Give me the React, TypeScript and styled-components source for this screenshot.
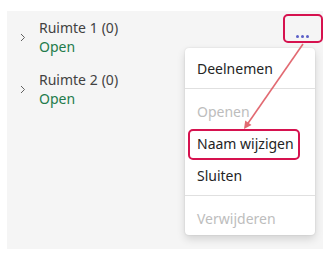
import React from "react";
import styled, { createGlobalStyle } from "styled-components";

const Global = createGlobalStyle`
  html, body { margin: 0; padding: 0; background: #ffffff; }
  body { font-family: "Segoe UI", "Noto Sans", "Open Sans", sans-serif; }
  * { box-sizing: border-box; }
`;

const Page = styled.div`
  position: relative;
  width: 330px;
  height: 253px;
  padding: 11px 0 0 7px;
`;

const Panel = styled.div`
  position: relative;
  width: 316px;
  height: 238px;
  background: #f5f5f5;
  padding-top: 7px;
  display: flex;
  flex-direction: column;
  gap: 14px;
`;

const Row = styled.div`
  display: flex;
  align-items: center;
  padding-left: 13px;
  padding-right: 12px;
`;

const Chevron = styled.span`
  width: 19px;
  display: flex;
  align-items: center;
  color: #616161;
`;

const Info = styled.div`
  display: flex;
  flex-direction: column;
  flex: 1;
`;

const Name = styled.div`
  font-size: 14px;
  line-height: 19px;
  color: #424242;
  white-space: nowrap;
`;

const Count = styled.span`
  margin-left: 4px;
`;

const Status = styled.div`
  font-size: 14px;
  line-height: 19px;
  color: #237b4b;
`;

const MoreButton = styled.div`
  display: flex;
  gap: 2px;
  align-self: flex-start;
  margin-top: 17px;
  margin-right: 2px;
`;

const Dot = styled.span`
  width: 3px;
  height: 3px;
  border-radius: 50%;
  background: #5b5fc7;
`;

const Menu = styled.div`
  position: absolute;
  left: 178px;
  top: 37px;
  width: 130px;
  background: #ffffff;
  border-radius: 4px;
  box-shadow: 0 0 2px rgba(0, 0, 0, 0.12), 0 4px 8px rgba(0, 0, 0, 0.14);
  padding: 4px 0 1px;
  display: flex;
  flex-direction: column;
`;

const Item = styled.div<{ $disabled?: boolean }>`
  height: 32px;
  display: flex;
  align-items: center;
  padding-left: 12px;
  font-size: 14px;
  line-height: 19px;
  color: ${(p) => (p.$disabled ? "#bdbdbd" : "#242424")};
`;

const Divider = styled.div`
  height: 1px;
  background: #e0e0e0;
  margin: 4px 0 6px;
`;

const Highlight = styled.div<{ $x: number; $y: number; $w: number; $h: number }>`
  position: absolute;
  left: ${(p) => p.$x}px;
  top: ${(p) => p.$y}px;
  width: ${(p) => p.$w}px;
  height: ${(p) => p.$h}px;
  border: 2px solid #d6124f;
  border-radius: 5px;
  pointer-events: none;
`;

const ArrowLayer = styled.svg`
  position: absolute;
  left: 0;
  top: 0;
  width: 330px;
  height: 253px;
  pointer-events: none;
`;

const ChevronIcon = () => (
  <svg width="6" height="9" viewBox="0 0 6 9">
    <path d="M1 1 L4.5 4.5 L1 8" fill="none" stroke="#616161" strokeWidth="1" />
  </svg>
);

const rooms = [
  { name: "Ruimte 1", count: "(0)", status: "Open", more: true },
  { name: "Ruimte 2", count: "(0)", status: "Open", more: false },
];

export default function App() {
  return (
    <>
      <Global />
      <Page>
        <Panel>
          {rooms.map((r) => (
            <Row key={r.name}>
              <Chevron>
                <ChevronIcon />
              </Chevron>
              <Info>
                <Name>
                  {r.name}
                  <Count>{r.count}</Count>
                </Name>
                <Status>{r.status}</Status>
              </Info>
              {r.more && (
                <MoreButton>
                  <Dot />
                  <Dot />
                  <Dot />
                </MoreButton>
              )}
            </Row>
          ))}
          <Menu>
            <Item>Deelnemen</Item>
            <Divider />
            <Item $disabled>Openen</Item>
            <Item>Naam wijzigen</Item>
            <Item>Sluiten</Item>
            <Divider />
            <Item $disabled>Verwijderen</Item>
          </Menu>
        </Panel>
        <Highlight $x={283} $y={14} $w={40} $h={29} />
        <Highlight $x={188} $y={129} $w={112} $h={31} />
        <ArrowLayer viewBox="0 0 330 253">
          <line x1="303" y1="44" x2="247.5" y2="124" stroke="#e26a72" strokeWidth="1.6" />
          <path d="M244 129 L245.2 120.6 L251.5 124.9 Z" fill="#e26a72" />
        </ArrowLayer>
      </Page>
    </>
  );
}
